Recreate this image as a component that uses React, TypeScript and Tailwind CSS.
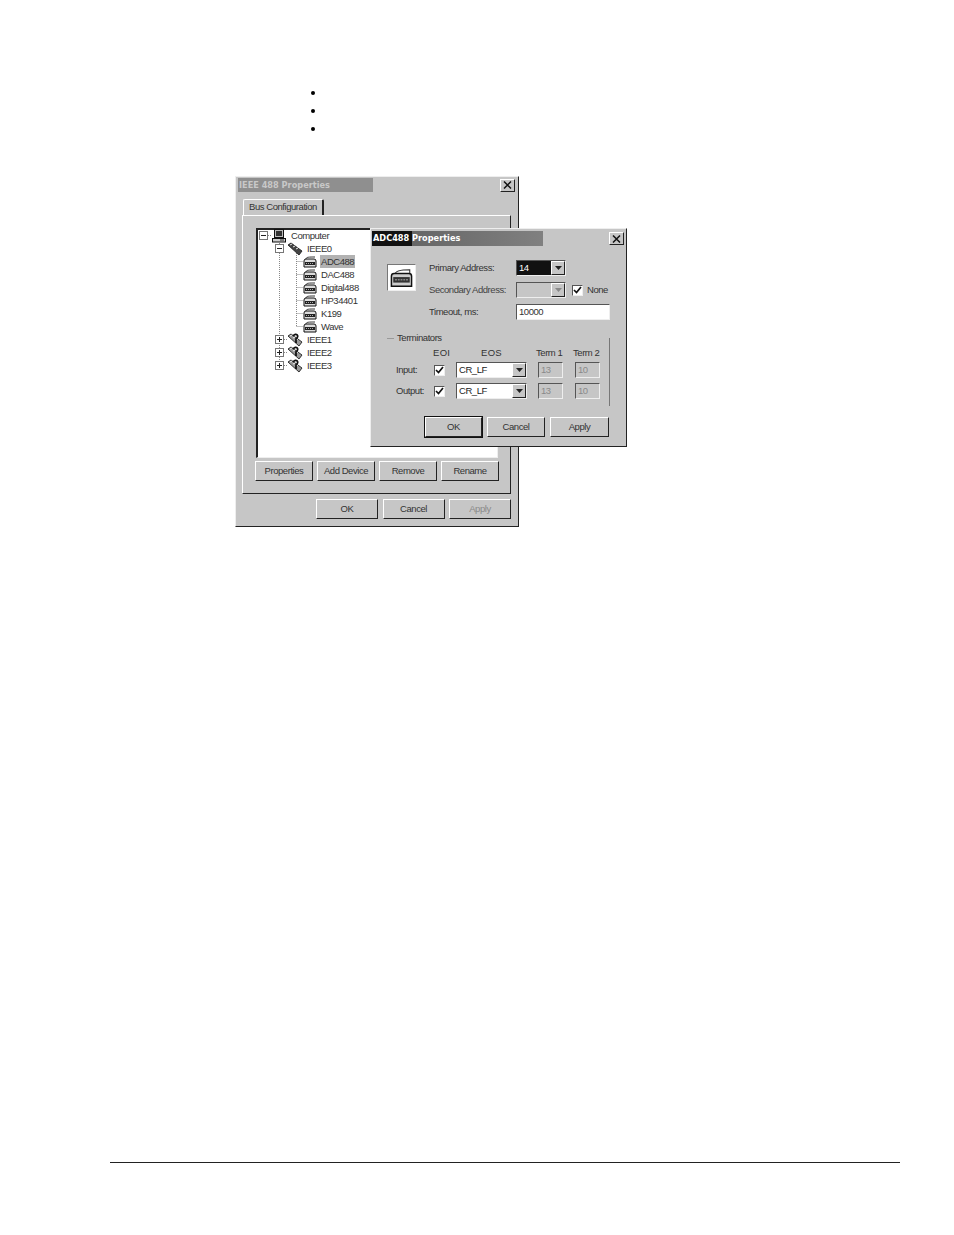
const raised = "border border-t-white border-l-white border-r-[#222] border-b-[#222] bg-[#c6c6c6]";
const sunken = "border border-t-[#555] border-l-[#555] border-r-[#eee] border-b-[#eee]";
const uiText = "text-[9.5px] tracking-[-0.45px] whitespace-nowrap";

function Btn({ label, w, dim, dark }: { label: string; w: string; dim?: boolean; dark?: boolean }) {
  return (
    <div className={`${w} h-[20px] flex items-center justify-center ${uiText} ${raised} ${dim ? "text-[#8a8a8a]" : "text-[#333]"} ${dark ? "outline outline-[#111]" : ""}`}>
      {label}
    </div>
  );
}

function CloseBtn() {
  return (
    <div className={`w-[15px] h-[13px] flex items-center justify-center ${raised}`}>
      <svg width="9" height="8" viewBox="0 0 9 8">
        <path d="M1 0.5 L8 7.5 M8 0.5 L1 7.5" stroke="#111" strokeWidth="1.5" />
      </svg>
    </div>
  );
}

function Arrow({ dim }: { dim?: boolean }) {
  return (
    <div className={`w-[14px] h-full flex items-center justify-center ${raised}`}>
      <svg width="7" height="4" viewBox="0 0 7 4">
        <path d="M0 0 H7 L3.5 4 Z" fill={dim ? "#888" : "#222"} />
      </svg>
    </div>
  );
}

function Check() {
  return (
    <div className={`w-[11px] h-[11px] bg-white flex items-center justify-center ${sunken}`}>
      <svg width="9" height="8" viewBox="0 0 9 8">
        <path d="M1 4 L3.5 6.5 L8 1" stroke="#111" strokeWidth="1.7" fill="none" />
      </svg>
    </div>
  );
}

function Combo({ value, w, dark, dim }: { value?: string; w: string; dark?: boolean; dim?: boolean }) {
  return (
    <div className={`${w} h-[16px] flex items-center justify-between ${sunken} ${dim ? "bg-[#c6c6c6]" : "bg-white"}`}>
      <span className={`flex-1 h-full pl-[2px] leading-[14px] ${dark ? "bg-[#111] text-white" : "text-[#222]"}`}>{value}</span>
      <Arrow dim={dim} />
    </div>
  );
}

function TermBox({ value }: { value: string }) {
  return (
    <div className={`w-[25px] h-[16px] pl-[2px] leading-[14px] text-[#8a8a8a] bg-[#c6c6c6] ${sunken}`}>{value}</div>
  );
}

function Expander({ open }: { open?: boolean }) {
  return (
    <svg width="9" height="9" viewBox="0 0 9 9" className="shrink-0">
      <rect x="0.5" y="0.5" width="8" height="8" fill="#fff" stroke="#777" />
      <path d={open ? "M2 4.5 H7" : "M2 4.5 H7 M4.5 2 V7"} stroke="#222" />
    </svg>
  );
}

function PcIcon() {
  return (
    <svg width="14" height="14" viewBox="0 0 14 14" className="shrink-0">
      <rect x="2.5" y="0.5" width="9" height="8" fill="#bbb" stroke="#111" />
      <rect x="4" y="2" width="6" height="5" fill="#333" />
      <rect x="0.5" y="9.5" width="13" height="3.5" fill="#ccc" stroke="#111" />
      <path d="M8 11 H12" stroke="#333" />
    </svg>
  );
}

function BusIcon({ q }: { q?: boolean }) {
  return (
    <svg width="16" height="14" viewBox="0 0 16 14" className="shrink-0">
      <path d="M1 3 L4 1 L15 9 L12 13 Z" fill={q ? "#999" : "#444"} stroke="#222" strokeWidth="0.9" />
      <path d="M3 3 L5 2 M6 5 L8 4 M9 7 L11 6" stroke="#eee" />
      {q && <path d="M6 3 C9 -1 13 3 9 6 L9 10" stroke="#111" strokeWidth="1.8" fill="none" />}
    </svg>
  );
}

function DeviceIcon() {
  return (
    <svg width="14" height="12" viewBox="0 0 14 12" className="shrink-0">
      <path d="M3 3 C3 1 6 1 12 1" stroke="#333" fill="none" />
      <path d="M1 11 V5 Q1 3 3 3 H11 Q13 3 13 5 V11 Z" fill="#ddd" stroke="#111" />
      <rect x="2" y="6" width="10" height="3" fill="#222" />
      <path d="M3 7.5 H11" stroke="#aaa" strokeDasharray="1 1" />
    </svg>
  );
}

function BigIcon() {
  return (
    <div className="mt-[4px] w-[29px] h-[27px] bg-white border border-t-[#777] border-l-[#777] border-r-[#eee] border-b-[#eee] flex items-center justify-center">
      <svg width="25" height="22" viewBox="0 0 26 24">
        <path d="M6 8 C6 4 12 3 22 3 V7" stroke="#333" strokeWidth="1.2" fill="none" />
        <path d="M2 21 V10 Q2 7 5 7 H21 Q24 7 24 10 V21 Z" fill="#ccc" stroke="#111" strokeWidth="1.6" />
        <rect x="4" y="11" width="18" height="6" fill="#333" />
        <path d="M6 14 H20" stroke="#bbb" strokeDasharray="2 1" />
      </svg>
    </div>
  );
}

function TreeRow({ indent, icon, label, selected }: { indent: string; icon: React.ReactNode; label: string; selected?: boolean }) {
  return (
    <div className={`h-[13px] flex items-center ${indent}`}>
      {icon}
      <span className={`ml-[1px] px-[1px] leading-[13px] text-[#333] ${uiText} ${selected ? "bg-[#b2b2b2]" : ""}`}>{label}</span>
    </div>
  );
}

export default function App() {
  const devices = ["ADC488", "DAC488", "Digital488", "HP34401", "K199", "Wave"];
  return (
    <div className="w-[954px] h-[1235px] bg-white flex flex-col font-['Liberation_Sans',sans-serif]">
      <ul className="pt-[91px] pl-[311px] flex flex-col gap-[14px]">
        <li className="w-[4px] h-[4px] rounded-full bg-black" />
        <li className="w-[4px] h-[4px] rounded-full bg-black" />
        <li className="w-[4px] h-[4px] rounded-full bg-black" />
      </ul>

      <div className="relative ml-[235px] mt-[45px] w-[392px] h-[351px]">
        {/* back window */}
        <div className="absolute left-0 top-0 w-[284px] h-[351px] bg-[#c6c6c6] border border-t-[#eee] border-l-[#eee] border-r-[#222] border-b-[#222] pt-[1px] px-[2px]">
          <div className="h-[14px] flex items-center justify-between">
            <div className="w-[135px] h-full bg-[#8f8f8f] pl-[1px] text-[8.2px] font-bold font-['DejaVu_Sans',sans-serif] leading-[14px] whitespace-nowrap text-[#c8c8c8]">IEEE 488 Properties</div>
            <div className="mr-[1px]"><CloseBtn /></div>
          </div>
          <div className={`ml-[5px] mt-[7px] w-[81px] h-[16px] border-t border-l border-t-white border-l-white border-r-2 border-r-[#222] rounded-t-[2px] flex items-center justify-center text-[#333] ${uiText}`}>Bus Configuration</div>
          <div className="ml-[4px] w-[269px] h-[279px] border border-t-white border-l-white border-r-[#222] border-b-[#222] pt-[12px] pl-[13px]">
            <div className="relative w-[242px] h-[230px] bg-white border-t-2 border-l-2 border-t-[#222] border-l-[#222] border-r border-b border-r-[#eee] border-b-[#eee]">
              {/* tree connector lines */}
              <svg className="absolute left-0 top-0" width="60" height="150">
                <path d="M21.5 11 V135 M10 5.5 H14 M38.5 17 V96 M38.5 31.5 H45 M38.5 44.5 H45 M38.5 57.5 H45 M38.5 70.5 H45 M38.5 83.5 H45 M38.5 96.5 H45 M26 109.5 H29 M26 122.5 H29 M26 135.5 H29" stroke="#888" strokeDasharray="1 1" fill="none" />
              </svg>
              <div className="relative -mt-[1px]">
                <TreeRow indent="pl-[1px]" label="Computer" icon={<><Expander open /><span className="w-[4px]" /><PcIcon /><span className="w-[3px]" /></>} />
                <TreeRow indent="pl-[17px]" label="IEEE0" icon={<><Expander open /><span className="w-[3px]" /><BusIcon /><span className="w-[2px]" /></>} />
                {devices.map((d, i) => (
                  <TreeRow key={d} indent="pl-[45px]" label={d} selected={i === 0} icon={<><DeviceIcon /><span className="w-[2px]" /></>} />
                ))}
                {["IEEE1", "IEEE2", "IEEE3"].map((d) => (
                  <TreeRow key={d} indent="pl-[17px]" label={d} icon={<><Expander /><span className="w-[3px]" /><BusIcon q /><span className="w-[2px]" /></>} />
                ))}
              </div>
            </div>
            <div className="mt-[3px] ml-[-1px] flex gap-[4px]">
              <Btn label="Properties" w="w-[58px]" />
              <Btn label="Add Device" w="w-[58px]" />
              <Btn label="Remove" w="w-[58px]" />
              <Btn label="Rename" w="w-[58px]" />
            </div>
          </div>
          <div className="mt-[5px] ml-[78px] flex gap-[4.5px]">
            <Btn label="OK" w="w-[62px]" />
            <Btn label="Cancel" w="w-[62px]" />
            <Btn label="Apply" w="w-[62px]" dim />
          </div>
        </div>

        {/* front window */}
        <div className="absolute left-[135px] top-[52px] w-[257px] h-[219px] bg-[#c6c6c6] border border-t-[#eee] border-l-[#eee] border-r-[#222] border-b-[#222] pt-[2px] px-[1px]">
          <div className="h-[15px] flex items-center justify-between">
            <div className="w-[171px] h-full bg-[linear-gradient(to_right,#111_0,#111_40px,#666_40px,#808080_100%)] pl-[1px] text-[8.2px] font-bold font-['DejaVu_Sans',sans-serif] leading-[15px] whitespace-nowrap text-white">ADC488 Properties</div>
            <div className="mr-[1px]"><CloseBtn /></div>
          </div>
          <div className={`flex pl-[15px] pt-[14px] text-[#333] ${uiText}`}>
            <BigIcon />
            <div className="ml-[13px] flex flex-col">
              <div className="h-[16px] flex items-center">
                <span className="w-[87px]">Primary Address:</span>
                <Combo value="14" w="w-[50px]" dark />
              </div>
              <div className="mt-[6px] h-[16px] flex items-center">
                <span className="w-[87px] text-[#444]">Secondary Address:</span>
                <Combo w="w-[50px]" dim />
                <span className="ml-[6px]"><Check /></span>
                <span className="ml-[4px]">None</span>
              </div>
              <div className="mt-[6px] h-[16px] flex items-center">
                <span className="w-[87px]">Timeout, ms:</span>
                <div className={`w-[94px] h-[16px] pl-[2px] bg-white leading-[14px] ${sunken}`}>10000</div>
              </div>
            </div>
          </div>

          <div className={`relative ml-[18px] mt-[18px] w-[220px] h-[68px] border-r border-r-[#777] text-[#333] ${uiText}`}>
            <span className="absolute left-[-3px] top-0 w-[7px] h-[1px] bg-[#999]" />
            <span className="absolute left-[6px] top-[-7px] px-[1px]">Terminators</span>
            <div className="flex h-[24px] items-end pb-[2px]">
              <span className="ml-[43px] w-[20px] tracking-[0.3px]">EOI</span>
              <span className="ml-[28px] w-[30px] tracking-[0.3px]">EOS</span>
              <span className="ml-[25px] w-[37px]">Term 1</span>
              <span>Term 2</span>
            </div>
            <div className="h-[16px] flex items-center">
              <span className="ml-[6px] w-[38px]">Input:</span>
              <Check />
              <span className="w-[11px]" />
              <Combo value="CR_LF" w="w-[71px]" />
              <span className="w-[11px]" />
              <TermBox value="13" />
              <span className="w-[12px]" />
              <TermBox value="10" />
            </div>
            <div className="mt-[5px] h-[16px] flex items-center">
              <span className="ml-[6px] w-[38px]">Output:</span>
              <Check />
              <span className="w-[11px]" />
              <Combo value="CR_LF" w="w-[71px]" />
              <span className="w-[11px]" />
              <TermBox value="13" />
              <span className="w-[12px]" />
              <TermBox value="10" />
            </div>
          </div>

          <div className="mt-[11px] ml-[53px] flex gap-[5px]">
            <Btn label="OK" w="w-[57px]" dark />
            <Btn label="Cancel" w="w-[58px]" />
            <Btn label="Apply" w="w-[59px]" />
          </div>
        </div>
      </div>

      <div className="mt-auto mb-[72px] ml-[110px] w-[790px] h-[1px] bg-[#222]" />
    </div>
  );
}
